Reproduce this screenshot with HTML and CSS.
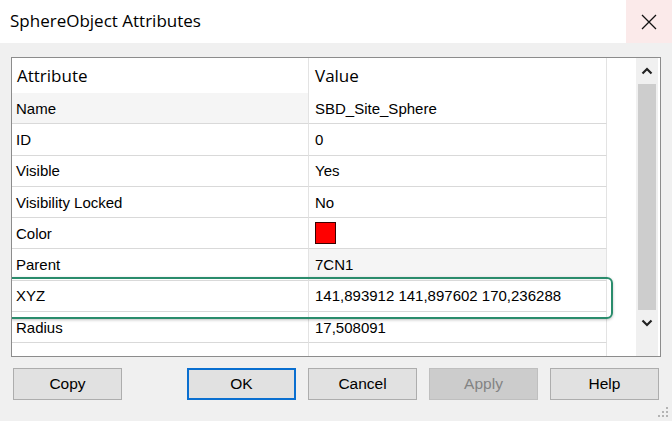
FILE: index.html
```html
<html>
<head>
<meta charset="utf-8">
<meta name="viewport" content="width=device-width, initial-scale=1.0">
<title>SphereObject Attributes</title>
<link rel="stylesheet" href="styles.css">
</head>
<body>
<div class='window'>
  <div class='titlebar'>
    <span class='title'>SphereObject Attributes</span>
    <div class='close'>
      <svg width='16' height='16' viewBox='0 0 16 16'>
        <path d='M1 1L15 15M15 1L1 15' stroke='#111' stroke-width='1.3' fill='none'/>
      </svg>
    </div>
  </div>
  <div class='content'>
    <div class='listbox'>
      <div class='grid'>
        <div class='head'>Attribute</div><div class='head'>Value</div>
        <div class='cell alt'>Name</div><div class='cell'>SBD_Site_Sphere</div>
        <div class='cell'>ID</div><div class='cell'>0</div>
        <div class='cell'>Visible</div><div class='cell'>Yes</div>
        <div class='cell'>Visibility Locked</div><div class='cell'>No</div>
        <div class='cell'>Color</div><div class='cell'><span class='swatch'></span></div>
        <div class='cell'>Parent</div><div class='cell alt'>7CN1</div>
        <div class='cell'>XYZ</div><div class='cell'>141,893912 141,897602 170,236288</div>
        <div class='cell'>Radius</div><div class='cell'>17,508091</div>
        <div class='cell'></div><div class='cell'></div>
      </div>
      <div class='filler'></div>
      <div class='scrollbar'>
        <div class='arrow'>
          <svg width='12' height='8' viewBox='0 0 12 8'><path d='M1.5 6.5L6 2L10.5 6.5' stroke='#222' stroke-width='2.2' fill='none'/></svg>
        </div>
        <div class='thumb'></div>
        <div class='arrow'>
          <svg width='12' height='8' viewBox='0 0 12 8'><path d='M1.5 1.5L6 6L10.5 1.5' stroke='#222' stroke-width='2.2' fill='none'/></svg>
        </div>
      </div>
      <div class='highlight'></div>
    </div>
    <div class='buttons'>
      <button>Copy</button>
      <span class='spacer'></span>
      <button class='default'>OK</button>
      <button>Cancel</button>
      <button disabled>Apply</button>
      <button>Help</button>
    </div>
  </div>
  <svg class='grip' width='12' height='12' viewBox='0 0 12 12'>
    <g fill='#b4b4b4'>
      <rect x='9' y='1' width='2' height='2'/>
      <rect x='5' y='5' width='2' height='2'/><rect x='9' y='5' width='2' height='2'/>
      <rect x='1' y='9' width='2' height='2'/><rect x='5' y='9' width='2' height='2'/><rect x='9' y='9' width='2' height='2'/>
    </g>
  </svg>
</div>
</body>
</html>
```

FILE: styles.css
```css
html, body {
  margin: 0;
  padding: 0;
}
.window {
  position: relative;
  width: 672px;
  height: 421px;
  background: #f0f0f0;
  font-family: "Liberation Sans", Arial, sans-serif;
  font-size: 15px;
  color: #000;
  overflow: hidden;
}
.titlebar {
  height: 43px;
  background: #fff;
  display: flex;
  align-items: center;
  justify-content: space-between;
}
.title {
  font-family: "Open Sans", sans-serif;
  font-size: 17px;
  padding-left: 10px;
  padding-bottom: 2px;
}
.close {
  width: 46px;
  height: 43px;
  background: #fbeaea;
  display: flex;
  align-items: center;
  justify-content: center;
}
.content {
  padding: 14px 11px 0 11px;
}
.listbox {
  position: relative;
  height: 298px;
  border: 1px solid #8c8c8c;
  background: #fff;
  display: flex;
  overflow: hidden;
}
.grid {
  display: grid;
  grid-template-columns: 297px 298px;
  grid-template-rows: 35px;
  grid-auto-rows: 31.3px;
}
.head {
  font-family: "Open Sans", sans-serif;
  font-size: 17px;
  padding-left: 5px;
  display: flex;
  align-items: center;
  border-right: 1px solid #e3e3e3;
  box-sizing: border-box;
}
.head + .head, .cell:nth-child(even) {
  padding-left: 6px;
}
.cell {
  display: flex;
  align-items: center;
  padding-left: 4px;
  border-right: 1px solid #e3e3e3;
  border-bottom: 1px solid #d9d9d9;
  box-sizing: border-box;
  white-space: nowrap;
}
.cell.alt {
  background: #f5f5f5;
}
.swatch {
  display: inline-block;
  width: 21px;
  height: 22px;
  background: #f00;
  border: 1px solid #3a0000;
  box-sizing: border-box;
}
.filler {
  flex: 1;
}
.scrollbar {
  width: 22px;
  margin-right: 2px;
  background: #f0f0f0;
  display: flex;
  flex-direction: column;
  align-items: center;
}
.arrow {
  height: 26px;
  display: flex;
  align-items: center;
  justify-content: center;
}
.thumb {
  width: 18px;
  height: 226px;
  background: #cdcdcd;
}
.highlight {
  position: absolute;
  left: -5px;
  top: 219px;
  width: 602px;
  height: 38px;
  border: 2px solid #2a8c6c;
  border-radius: 6px;
  box-shadow: 0 1px 3px rgba(0, 0, 0, 0.25);
}
.buttons {
  display: flex;
  gap: 12px;
  margin-top: 11px;
  padding-left: 2px;
}
.spacer {
  width: 41px;
  flex-shrink: 0;
}
button {
  flex-shrink: 0;
  width: 109px;
  height: 32px;
  background: #e1e1e1;
  border: 1px solid #adadad;
  font-family: "Liberation Sans", Arial, sans-serif;
  font-size: 15.5px;
  color: #000;
  padding: 0;
}
button.default {
  border: 2px solid #0a6fd0;
}
button:disabled {
  background: #cccccc;
  border-color: #bfbfbf;
  color: #838383;
}
.grip {
  position: absolute;
  right: 3px;
  bottom: 3px;
}
```
